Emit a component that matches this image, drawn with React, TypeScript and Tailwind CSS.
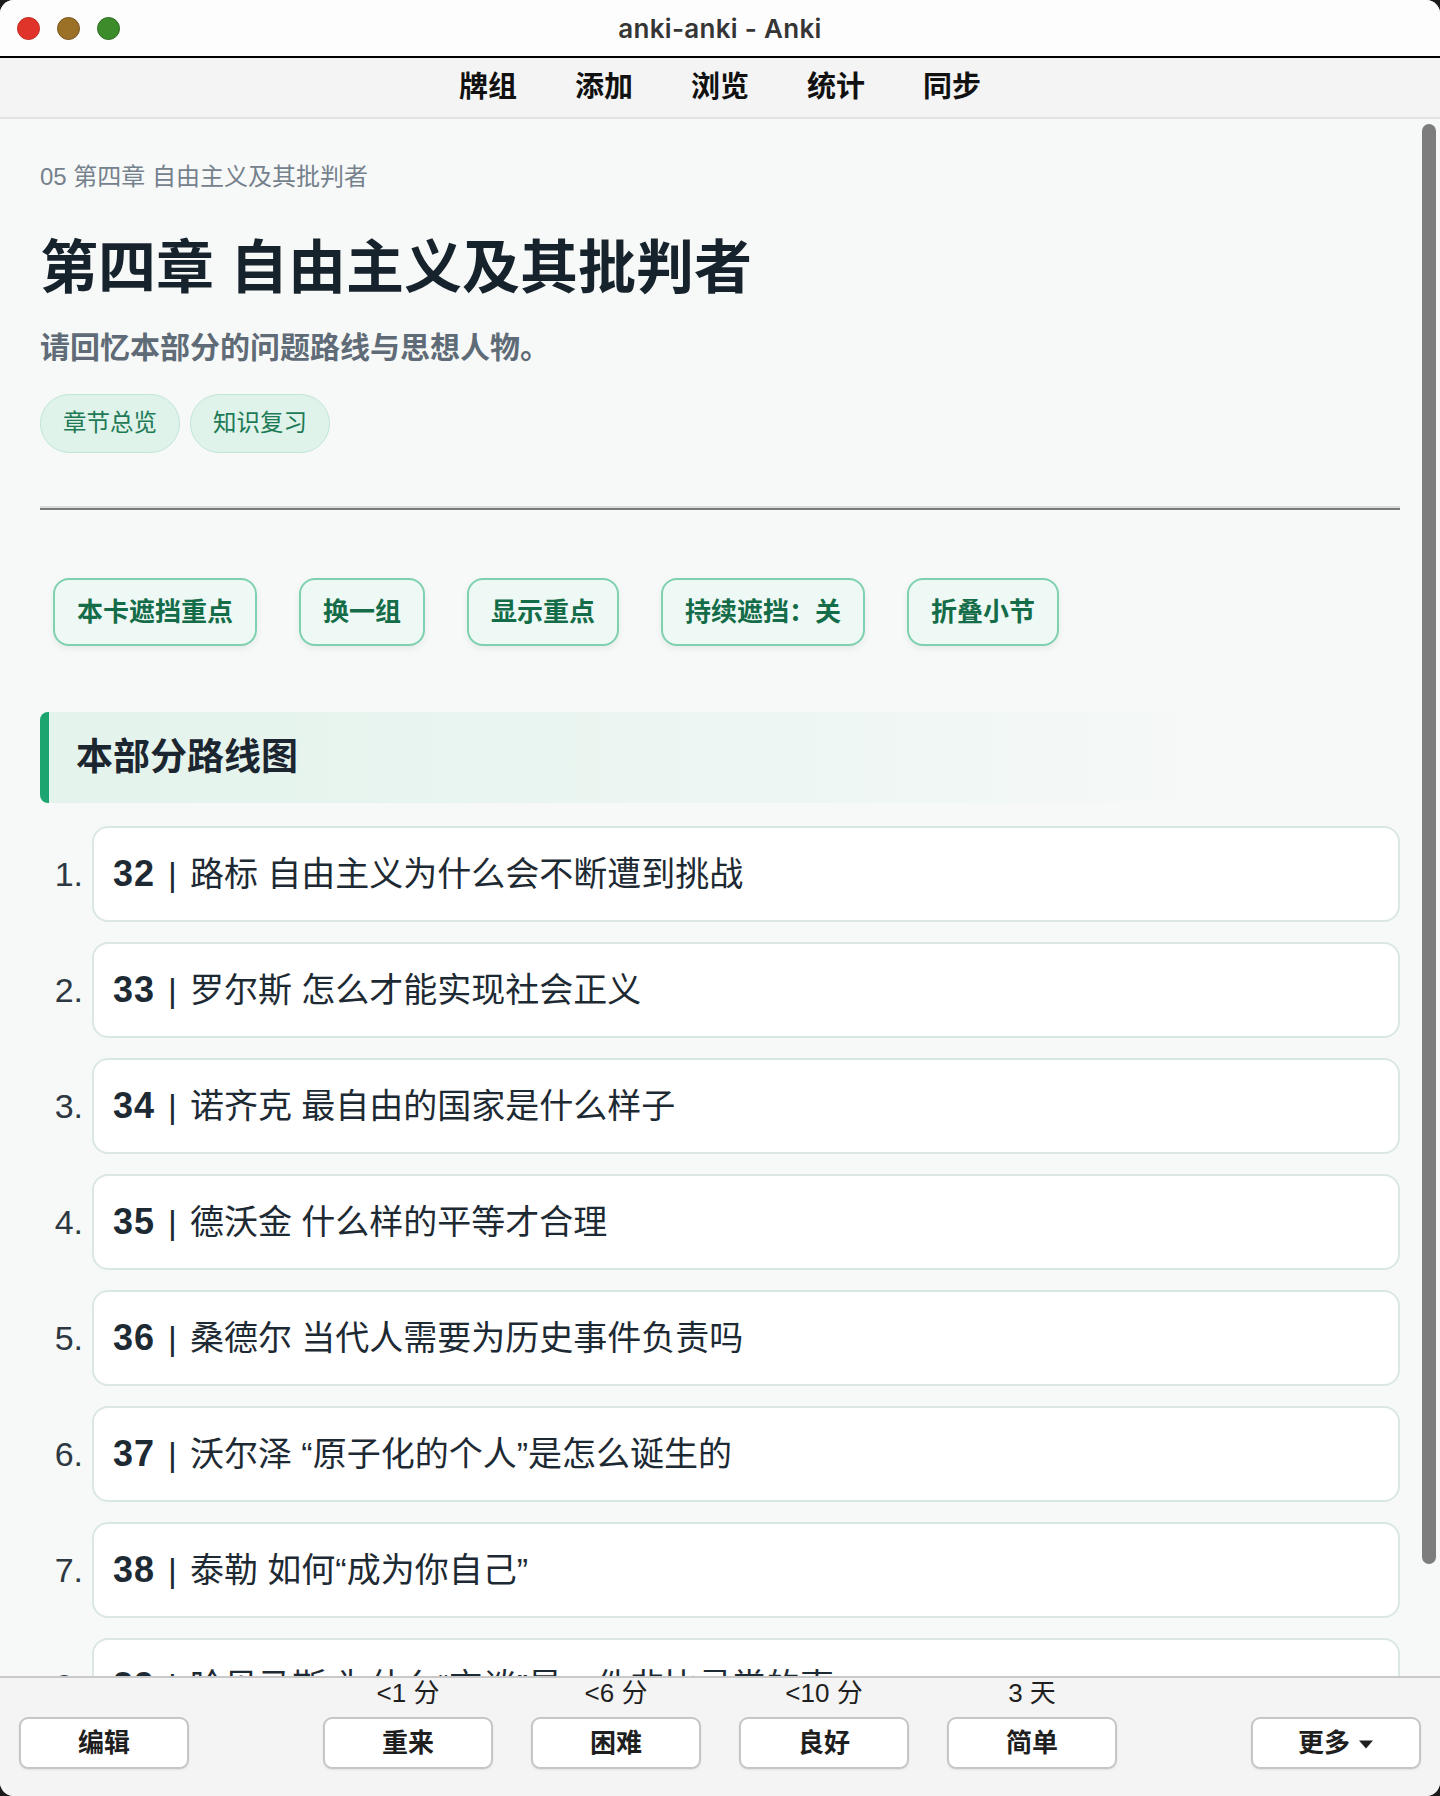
import React from "react";

type Item = [string, string, string];

const items: Item[] = [
  ["32", "路标", "自由主义为什么会不断遭到挑战"],
  ["33", "罗尔斯", "怎么才能实现社会正义"],
  ["34", "诺齐克", "最自由的国家是什么样子"],
  ["35", "德沃金", "什么样的平等才合理"],
  ["36", "桑德尔", "当代人需要为历史事件负责吗"],
  ["37", "沃尔泽", "“原子化的个人”是怎么诞生的"],
  ["38", "泰勒", "如何“成为你自己”"],
  ["39", "哈贝马斯", "为什么“交谈”是一件非比寻常的事"],
  ["40", "阿伦特", "为什么“行动”比“劳动”更重要"],
];

const actions = ["本卡遮挡重点", "换一组", "显示重点", "持续遮挡：关", "折叠小节"];

const answers: [string, string][] = [
  ["<1 分", "重来"],
  ["<6 分", "困难"],
  ["<10 分", "良好"],
  ["3 天", "简单"],
];

function BarButton({ children }: { children: React.ReactNode }) {
  return (
    <div className="w-[170px] h-[52px] rounded-[9px] border-2 border-[#c6c6c6] bg-white shadow-[0_1px_2px_rgba(0,0,0,0.08)] flex items-center justify-center text-[26px] font-bold text-[#1f1f1f]">
      {children}
    </div>
  );
}

export default function App() {
  return (
    <div className="w-[1440px] h-[1796px] bg-[#1b1b1b] font-['Liberation_Sans','Noto_Sans_CJK_SC',sans-serif]">
      <div className="h-full rounded-[14px] overflow-hidden flex flex-col bg-[#f7f9f8]">
        {/* window title bar */}
        <div className="h-[56px] shrink-0 bg-[#fdfdfd] grid grid-cols-[1fr_auto_1fr] items-center">
          <div className="flex items-center gap-[17px] pl-[17px]">
            <span className="w-[23px] h-[23px] rounded-full bg-[#e0332a] border border-[#c22a20]" />
            <span className="w-[23px] h-[23px] rounded-full bg-[#9b7128] border border-[#7a5419]" />
            <span className="w-[23px] h-[23px] rounded-full bg-[#3c8c2b] border border-[#2b6c1e]" />
          </div>
          <div className="font-['Inter','Noto_Sans_CJK_SC',sans-serif] text-[26px] font-semibold text-[#353535] tracking-[0.3px]">
            anki-anki - Anki
          </div>
          <div />
        </div>
        <div className="h-[2px] shrink-0 bg-black" />

        {/* top menu */}
        <div className="h-[61px] shrink-0 bg-[#f4f4f4] border-b-2 border-[#e3e3e3] flex items-center justify-center gap-[58px] text-[29px] font-bold text-[#111]">
          <span>牌组</span>
          <span>添加</span>
          <span>浏览</span>
          <span>统计</span>
          <span>同步</span>
        </div>

        {/* card content */}
        <div className="flex-1 relative overflow-hidden bg-[#f7f9f8]">
          <div className="px-[40px] pt-[42px]">
            <div className="text-[24px] leading-[32px] text-[#75818c]">05 第四章 自由主义及其批判者</div>
            <h1 className="mt-[40px] text-[58px] leading-[70px] font-bold text-[#17232c]">第四章 自由主义及其批判者</h1>
            <p className="mt-[25px] text-[30px] leading-[40px] font-semibold text-[#5f6b76]">请回忆本部分的问题路线与思想人物。</p>
            <div className="mt-[26px] flex gap-[10px]">
              {["章节总览", "知识复习"].map((t) => (
                <span
                  key={t}
                  className="h-[59px] px-[22px] rounded-full border-[1.5px] border-[#bfe5d5] bg-[#dff3eb] text-[23.5px] text-[#1d7a55] flex items-center"
                >
                  {t}
                </span>
              ))}
            </div>

            <div className="mt-[53px]">
              <div className="h-[2px] bg-[#d7dedb]" />
              <div className="h-[2px] bg-[#787b7a]" />
            </div>

            <div className="mt-[68px] flex gap-[42px] pl-[13px]">
              {actions.map((a) => (
                <div
                  key={a}
                  className="h-[68px] px-[22px] rounded-[16px] border-2 border-[#7fd0af] bg-[#eef9f5] shadow-[0_3px_6px_rgba(20,80,60,0.08)] flex items-center text-[26px] font-bold text-[#146c48]"
                >
                  {a}
                </div>
              ))}
            </div>

            <div className="mt-[66px] h-[91px] flex items-center pl-[27px] border-l-[9px] border-[#1ca56f] rounded-l-[8px] bg-[linear-gradient(90deg,#e4f3ec_0%,#ecf6f2_50%,#f7f9f8_90%)]">
              <h2 className="text-[37px] font-bold text-[#1b2630]">本部分路线图</h2>
            </div>

            <ol className="mt-[23px] flex flex-col gap-[20px]">
              {items.map(([no, name, q], i) => (
                <li key={no} className="flex items-center">
                  <span className="w-[43px] text-right text-[34px] text-[#2e3842]">{i + 1}.</span>
                  <div className="ml-[9px] flex-1 h-[96px] rounded-[16px] border-2 border-[#dbe7e3] bg-white pl-[19px] flex items-center text-[34px] text-[#1e2a33] whitespace-nowrap">
                    <b className="font-bold text-[36px] tracking-[1px]">{no}</b>
                    <span className="mx-[13px] font-light">|</span>
                    <span>
                      {name} {q}
                    </span>
                  </div>
                </li>
              ))}
            </ol>
          </div>

          {/* overlay scrollbar */}
          <div className="absolute top-[5px] right-[4px] w-[14px] h-[1440px] rounded-full bg-[#7c7d7c]" />
        </div>

        {/* answer bar */}
        <div className="h-[120px] shrink-0 border-t-2 border-[#c9c9c9] bg-[#f4f4f4] px-[19px] flex justify-between">
          <div className="flex flex-col">
            <div className="h-[30px]" />
            <div className="mt-[9px]">
              <BarButton>编辑</BarButton>
            </div>
          </div>
          <div className="flex gap-[38px]">
            {answers.map(([due, label]) => (
              <div key={label} className="flex flex-col items-center">
                <div className="h-[30px] leading-[30px] text-[26px] text-[#1f1f1f]">{due}</div>
                <div className="mt-[9px]">
                  <BarButton>{label}</BarButton>
                </div>
              </div>
            ))}
          </div>
          <div className="flex flex-col">
            <div className="h-[30px]" />
            <div className="mt-[9px]">
              <BarButton>
                <span>更多</span>
                <svg width="16" height="9" viewBox="0 0 16 9" className="ml-[8px] mt-[2px]">
                  <path d="M1 0.5 L15 0.5 L8 8.5 Z" fill="#1f1f1f" />
                </svg>
              </BarButton>
            </div>
          </div>
        </div>
      </div>
    </div>
  );
}
